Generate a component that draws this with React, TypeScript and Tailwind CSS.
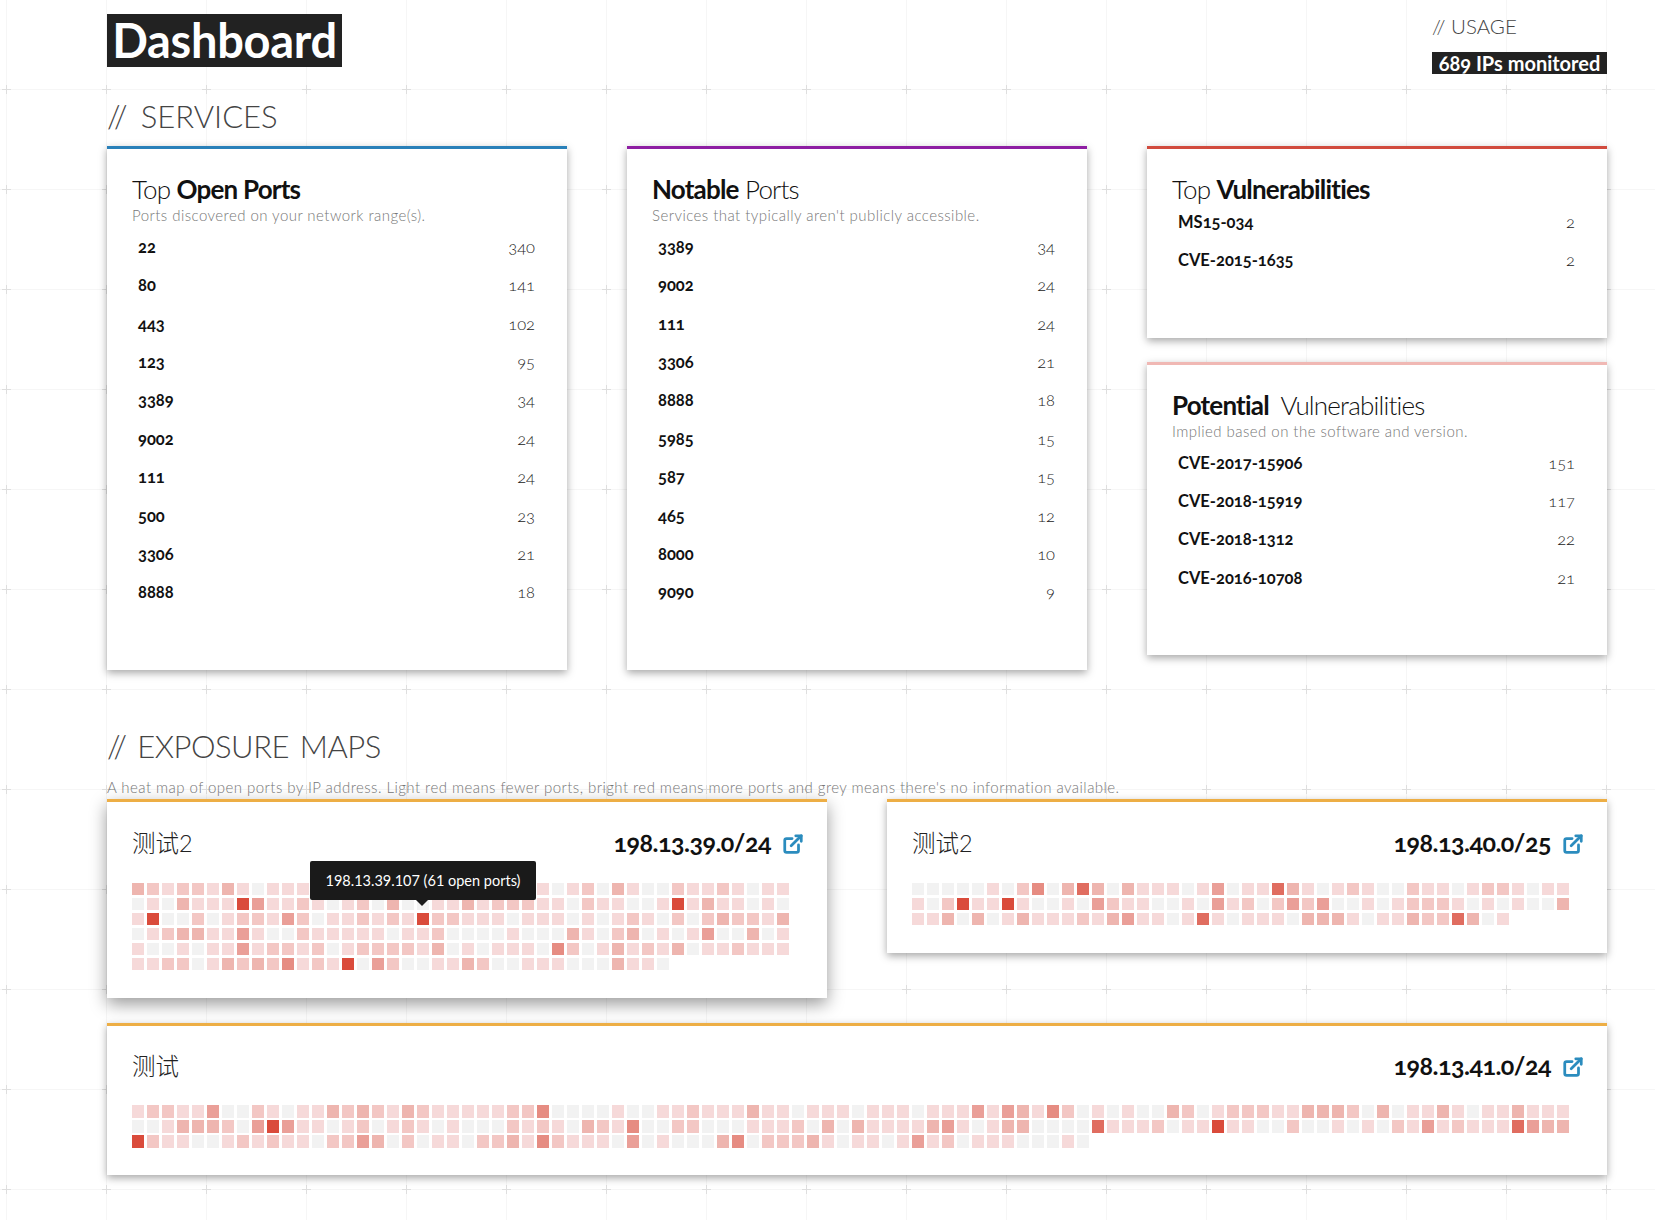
import React from 'react';
import { ExternalLink } from 'lucide-react';

const LEVELS = [
  'bg-[#f2f2f2]',
  'bg-[#f6d9d9]',
  'bg-[#f3c7c4]',
  'bg-[#eeb5af]',
  'bg-[#ea9f98]',
  'bg-[#e68c82]',
  'bg-[#e06d60]',
  'bg-[#da4b3b]',
];

const MAP_ONE = [
  '3212213101111' + '11101112112111' + '10120310021121011',
  '01031117411210120300' + '113122211021100171311010',
  '17002012214201121217' + '221110111010121020232213',
  '01233114100211111011' + '200001000310230101400301',
  '10010114122120122221' + '301011105201312130112111',
  '11220132325121704200' + '1132001110003110',
].join('');

const MAP_TWO = [
  '0000010250363031110140' + '1163101210021101221011',
  '1027117100104211001041' + '2024240010122210101003',
  '1130301311121341101610' + '111033310113226301',
].join('');

const MAP_THREE = [
  '12211400210113232132111112250000' + '10011211131101110111011141431520' + '10100320122211333203011310113111',
  '00133320474110120121010002121032' + '15002200011120303111134101330000' + '61112011711002001010214121116433',
  '72110012121102243020110223152111' + '04010003502223101101412011100010',
].join('');

const OPEN_PORTS = [['22', 340], ['80', 141], ['443', 102], ['123', 95], ['3389', 34], ['9002', 24], ['111', 24], ['500', 23], ['3306', 21], ['8888', 18]];
const NOTABLE_PORTS = [['3389', 34], ['9002', 24], ['111', 24], ['3306', 21], ['8888', 18], ['5985', 15], ['587', 15], ['465', 12], ['8000', 10], ['9090', 9]];
const TOP_VULNS = [['MS15-034', 2], ['CVE-2015-1635', 2]];
const POTENTIAL_VULNS = [['CVE-2017-15906', 151], ['CVE-2018-15919', 117], ['CVE-2018-1312', 22], ['CVE-2016-10708', 21]];

const Rows: React.FC<{ items: (string | number)[][] }> = ({ items }) => (
  <div>
    {items.map(([label, count]) => (
      <div key={label} className="flex h-[38.4px] items-center justify-between pl-[6px] pr-[7px] text-[16.5px] oldstyle-nums">
        <span className="font-bold text-[#111]">{label}</span>
        <span className="font-light text-[#222]">{count}</span>
      </div>
    ))}
  </div>
);

const Card: React.FC<{ accent: string; children: React.ReactNode }> = ({ accent, children }) => (
  <div className={`border-t-[3px] bg-white px-[25px] pt-[25px] shadow-[0_3px_8px_rgba(0,0,0,0.35)] ${accent}`}>
    {children}
  </div>
);

const CardTitle: React.FC<{ children: React.ReactNode }> = ({ children }) => (
  <h3 className="text-[26px] font-light leading-[30px] tracking-[-0.8px] text-[#111]">{children}</h3>
);

const CardHint: React.FC<{ children: React.ReactNode }> = ({ children }) => (
  <p className="mb-[2px] mt-[1px] text-[15px] font-light leading-[21px] tracking-[0.45px] text-[#777]">{children}</p>
);

const Heatmap: React.FC<{ cells: string; grid: string; cell: string; children?: React.ReactNode }> = ({ cells, grid, cell, children }) => (
  <div className={`relative grid ${grid}`}>
    {cells.split('').map((level, i) => (
      <div key={i} className={`${cell} ${LEVELS[Number(level)]}`} />
    ))}
    {children}
  </div>
);

const MapHeader: React.FC<{ name: string; cidr: string }> = ({ name, cidr }) => (
  <div className="flex h-[34px] items-center justify-between">
    <span className="text-[23.5px] font-light text-[#222]">{name}</span>
    <span className="flex items-center gap-[11px]">
      <span className="-mt-[2px] text-[25px] font-bold tracking-[-0.5px] text-[#111] oldstyle-nums">{cidr}</span>
      <ExternalLink size={22} strokeWidth={3} className="-mr-[2px] mt-[1px] text-[#2b8cbe]" />
    </span>
  </div>
);

const MapCard: React.FC<{ className?: string; children: React.ReactNode }> = ({ className = '', children }) => (
  <div className={`border-t-[3px] border-[#edae45] bg-white px-[25px] pt-[25px] shadow-[0_3px_8px_rgba(0,0,0,0.35)] ${className}`}>
    {children}
  </div>
);

export default function App() {
  return (
    <div
      className="min-h-screen bg-white bg-[url(data:image/svg+xml,%3Csvg%20xmlns=%22http://www.w3.org/2000/svg%22%20width=%22100%22%20height=%22100%22%3E%3Crect%20x=%2250%22%20width=%221%22%20height=%22100%22%20fill=%22%23f6f6f6%22/%3E%3Crect%20y=%2250%22%20width=%22100%22%20height=%221%22%20fill=%22%23f6f6f6%22/%3E%3Crect%20x=%2246%22%20y=%2250%22%20width=%229%22%20height=%221%22%20fill=%22%23dedede%22/%3E%3Crect%20x=%2250%22%20y=%2246%22%20width=%221%22%20height=%229%22%20fill=%22%23dedede%22/%3E%3C/svg%3E)] bg-[position:-44px_39px] pb-[45px] pl-[107px] pr-[48px] font-['Lato','Noto_Sans_CJK_SC',sans-serif]"
    >
      {/* Header */}
      <div className="flex h-[98px] items-start justify-between pt-[14px]">
        <h1 className="flex h-[53px] w-[235px] items-center justify-center bg-[#222] text-[47px] font-bold tracking-[-0.3px] text-white">
          Dashboard
        </h1>
        <div className="w-[175px]">
          <div className="-mt-[1px] flex h-[27px] items-center text-[20.5px] font-light leading-none text-[#444]">// USAGE</div>
          <div className="mt-[12px] flex h-[22px] items-center justify-center bg-[#222] text-[20px] font-bold text-white oldstyle-nums">
            689 IPs monitored
          </div>
        </div>
      </div>

      {/* Services */}
      <h2 className="mb-[12px] h-[36px] text-[31px] font-light leading-[36px] text-[#444] [word-spacing:5px]">// SERVICES</h2>
      <div className="grid grid-cols-3 items-start gap-x-[60px]">
        <Card accent="border-[#2980b9] pb-[58px]">
          <CardTitle>Top <b className="font-bold">Open Ports</b></CardTitle>
          <CardHint>Ports discovered on your network range(s).</CardHint>
          <Rows items={OPEN_PORTS} />
        </Card>
        <Card accent="border-[#8e1ea3] pb-[58px]">
          <CardTitle><b className="font-bold">Notable</b> Ports</CardTitle>
          <CardHint>Services that typically aren't publicly accessible.</CardHint>
          <Rows items={NOTABLE_PORTS} />
        </Card>
        <div className="flex flex-col gap-[24px]">
          <Card accent="border-[#d14b3e] pb-[58px]">
            <CardTitle>Top <b className="font-bold">Vulnerabilities</b></CardTitle>
            <div className="-mt-[1px]">
              <Rows items={TOP_VULNS} />
            </div>
          </Card>
          <Card accent="border-[#f0b8b4] pb-[58px]">
            <CardTitle><b className="font-bold">Potential</b>&nbsp; Vulnerabilities</CardTitle>
            <CardHint>Implied based on the software and version.</CardHint>
            <Rows items={POTENTIAL_VULNS} />
          </Card>
        </div>
      </div>

      {/* Exposure maps */}
      <h2 className="mt-[58px] h-[36px] text-[31px] font-light leading-[36px] tracking-[-0.5px] text-[#444] [word-spacing:3px]">// EXPOSURE MAPS</h2>
      <p className="mb-[1px] mt-[12px] text-[15px] font-light leading-[22px] tracking-[0.45px] text-[#777]">
        A heat map of open ports by IP address. Light red means fewer ports, bright red means more ports and grey means there's no information available.
      </p>
      <div className="grid grid-cols-2 items-start gap-x-[60px] gap-y-[25px]">
        <MapCard className="pb-[28px] shadow-[0_6px_16px_rgba(0,0,0,0.4)]">
          <MapHeader name="测试2" cidr="198.13.39.0/24" />
          <div className="mt-[22px]">
            <Heatmap cells={MAP_ONE} grid="grid-cols-[repeat(44,12px)] gap-[3px]" cell="h-[12px]">
              {/* Hover tooltip */}
              <div className="absolute left-[178px] top-[-22px] flex h-[39px] w-[226px] items-center justify-center rounded-[2px] bg-[#1a1a1a] text-[14.5px] text-white">
                198.13.39.107 (61 open ports)
                <div className="absolute bottom-[-6px] left-[106px] h-0 w-0 border-x-[6px] border-t-[6px] border-x-transparent border-t-[#1a1a1a]" />
              </div>
            </Heatmap>
          </div>
        </MapCard>
        <MapCard className="pb-[28px]">
          <MapHeader name="测试2" cidr="198.13.40.0/25" />
          <div className="mt-[22px]">
            <Heatmap cells={MAP_TWO} grid="grid-cols-[repeat(44,12px)] gap-[3px]" cell="h-[12px]" />
          </div>
        </MapCard>
        <MapCard className="col-span-2 pb-[27px]">
          <div className="-mt-[1px]">
            <MapHeader name="测试" cidr="198.13.41.0/24" />
          </div>
          <div className="mt-[21px]">
            <Heatmap cells={MAP_THREE} grid="grid-cols-[repeat(96,12px)] gap-x-[3px] gap-y-[2px]" cell="h-[13px]" />
          </div>
        </MapCard>
      </div>
    </div>
  );
}
